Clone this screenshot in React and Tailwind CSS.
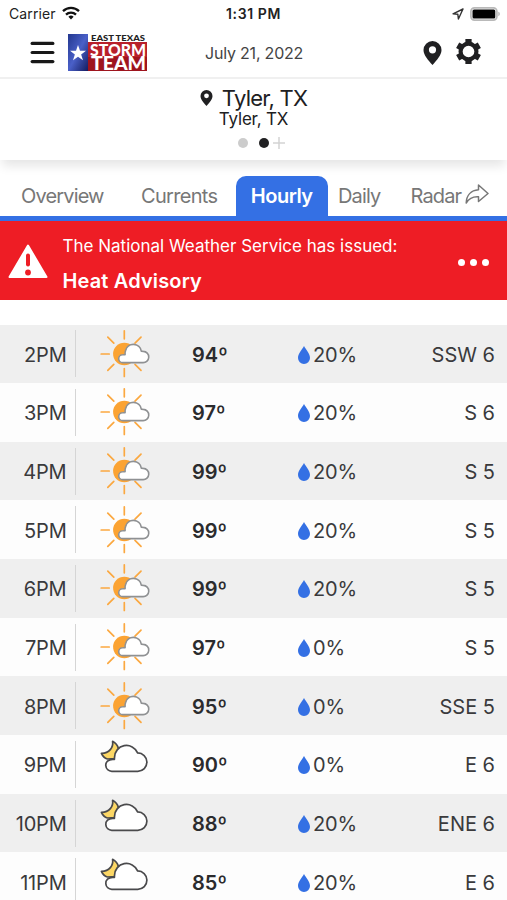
import { Menu } from 'lucide-react'

const HOURS = [
  { time: '2PM', sky: 'sun', temp: 94, rain: 20, wind: 'SSW 6' },
  { time: '3PM', sky: 'sun', temp: 97, rain: 20, wind: 'S 6' },
  { time: '4PM', sky: 'sun', temp: 99, rain: 20, wind: 'S 5' },
  { time: '5PM', sky: 'sun', temp: 99, rain: 20, wind: 'S 5' },
  { time: '6PM', sky: 'sun', temp: 99, rain: 20, wind: 'S 5' },
  { time: '7PM', sky: 'sun', temp: 97, rain: 0, wind: 'S 5' },
  { time: '8PM', sky: 'sun', temp: 95, rain: 0, wind: 'SSE 5' },
  { time: '9PM', sky: 'moon', temp: 90, rain: 0, wind: 'E 6' },
  { time: '10PM', sky: 'moon', temp: 88, rain: 20, wind: 'ENE 6' },
  { time: '11PM', sky: 'moon', temp: 85, rain: 20, wind: 'E 6' },
]

function SunCloud() {
  return (
    <svg viewBox="0 0 50 50" className="h-[50px] w-[50px] shrink-0" fill="none">
      <circle cx="24.3" cy="25" r="11.2" fill="#fba333" />
      <path
        d="M24.3 1.8v8M24.3 39.5v8M1.2 25h8M7.8 8.2l6 6M41 8.2l-6 6M7.8 41.3l6-6M41 41.3l-6-6"
        stroke="#fba840" strokeWidth="1.7" strokeLinecap="round"
      />
      <path
        d="M22.600 33.600H43A5.600 5.600 0 0 0 43.300 22.400L41.300 22.200A8 8 0 0 0 25.600 21.500C25 23 24.900 24.200 25.100 25.600L22.600 25.800A3.900 3.900 0 0 0 22.600 33.600Z"
        fill="#fff" stroke="#8f9193" strokeWidth="1.6" strokeLinejoin="round"
      />
    </svg>
  )
}

function MoonCloud() {
  return (
    <svg viewBox="0 0 50 50" className="h-[50px] w-[50px] shrink-0" fill="none" stroke="#4a4a4c" strokeWidth="1.7" strokeLinejoin="round">
      <path d="M12.600 2.300c.9 6-3.300 12.200-11.200 12.100 1.200 2.700 3.200 4.800 6 5.600l8-.5 3-10c-.8-3-3-5.800-5.800-7.200Z" fill="#fcd765" />
      <path
        d="M11.800 32.300h26a9.200 9.200 0 0 0-.2-18.400A12 12 0 0 0 14.500 18.500l-.1 1.900c-6.500-.8-9 3.300-8.600 6.300.3 3.200 2.800 5.600 6 5.600Z"
        fill="#fff"
      />
    </svg>
  )
}

function Pin({ className }) {
  return (
    <svg viewBox="0 0 18 24" className={className}>
      <path d="M9 0a9 9 0 0 1 9 9c0 5.2-4.6 10-9 15C4.6 19 0 14.2 0 9a9 9 0 0 1 9-9Zm0 5.200a3.6 3.6 0 1 0 0 7.200 3.6 3.6 0 0 0 0-7.200Z" fill="#202022" fillRule="evenodd" />
    </svg>
  )
}

function Logo() {
  return (
    <div className="flex h-[37px] w-[79px]">
      <div className="flex w-5 items-center justify-center bg-gradient-to-br from-[#23378f] via-[#4a60c8] to-[#151c60]">
        <svg viewBox="0 0 24 24" className="h-4 w-4" fill="#fff">
          <path d="M12 0l3 8.800h9l-7.300 5.400L19.500 23 12 17.600 4.500 23l2.800-8.800L0 8.800h9z" />
        </svg>
      </div>
      <svg viewBox="0 0 59 37" className="h-[37px] w-[59px] overflow-visible">
        <rect width="59" height="8" fill="#fff" />
        <rect y="8" width="59" height="29" fill="#b8202a" />
        <path d="M0 23h59v14H0z" fill="#9e141e" />
        <g fontFamily="Lato, sans-serif" fontWeight="900">
          <text x="3" y="7" fontSize="8" textLength="54" lengthAdjust="spacingAndGlyphs" fill="#222">EAST TEXAS</text>
          <text x="2" y="21.5" fontSize="17.5" textLength="56" lengthAdjust="spacingAndGlyphs" fill="#fff">STORM</text>
          <text x="3" y="36" fontSize="18.5" textLength="55" lengthAdjust="spacingAndGlyphs" fill="#fff">TEAM</text>
        </g>
      </svg>
    </div>
  )
}

function StatusBar() {
  return (
    <div className="flex h-7 items-center px-[9px] text-[#222]">
      <div className="flex flex-1 items-center gap-1.5">
        <span className="text-sm tracking-[0.1px]">Carrier</span>
        <svg viewBox="0 0 18 14" className="-mt-0.5 h-3.5 w-[18px]" fill="none" stroke="#111" strokeWidth="2.3">
          <path d="M1 5.200a11.500 11.500 0 0 1 16 0M4 8.600a7.200 7.200 0 0 1 10 0" />
          <path d="M9 13.500l-2.600-2.800a4 4 0 0 1 5.200 0z" fill="#111" stroke="none" />
        </svg>
      </div>
      <span className="text-sm font-semibold tracking-[0.6px]">1:31 PM</span>
      <div className="flex flex-1 items-center justify-end gap-1.5">
        <svg viewBox="0 0 12 12" className="h-3 w-3" fill="none" stroke="#333" strokeWidth="1.4" strokeLinejoin="round">
          <path d="M11 1L1 5.800l4.800.4.600 4.800z" />
        </svg>
        <svg viewBox="0 0 30 14" className="-mr-0.5 h-3.5 w-[30px]">
          <rect x=".9" y=".9" width="26" height="12.2" rx="3.5" fill="#fff" stroke="#b9b9b9" strokeWidth="1.7" />
          <rect x="2.5" y="2.5" width="22.8" height="9" rx="1.5" fill="#000" />
          <path d="M28.300 4.800c2 .6 2 3.800 0 4.400z" fill="#b5b5b5" />
        </svg>
      </div>
    </div>
  )
}

function Header() {
  return (
    <div className="flex h-[51px] items-center border-b-2 border-[#f0f0f0] pr-[26px] pl-[27px]">
      <div className="flex w-[178px] items-center gap-[10px]">
        <Menu size={31} strokeWidth={2.5} color="#181818" className="shrink-0" />
        <Logo />
      </div>
      <span className="flex-1 text-base tracking-[-0.2px] text-[#444]">July 21, 2022</span>
      <div className="flex items-center gap-[14px]">
        <Pin className="h-6 w-[19px]" />
        <svg viewBox="0 0 24 24" className="-mt-0.5 h-[25px] w-[25px] overflow-visible" fill="none" stroke="#202022">
          <circle cx="12" cy="12" r="7.600" strokeWidth="4" />
          <path d="M12 0v4M12 20v4M1.600 6l3.500 2M18.900 16l3.500 2M1.600 18l3.500-2M18.900 8l3.500-2" strokeWidth="6" />
        </svg>
      </div>
    </div>
  )
}

function Location() {
  return (
    <div className="flex h-[81px] flex-col items-center bg-white pt-[7px] text-[#202022] shadow-[0_8px_10px_-2px_rgba(0,0,0,0.1)]">
      <div className="flex items-center gap-[9px]">
        <Pin className="h-4 w-[13px]" />
        <span className="text-[22px] leading-6 tracking-[-0.75px]">Tyler, TX</span>
      </div>
      <span className="-mt-px text-[17px] leading-5 tracking-[-0.2px]">Tyler, TX</span>
      <div className="mt-2 ml-4 flex h-3 items-center">
        <span className="h-[10px] w-[10px] rounded-full bg-[#ccc]" />
        <span className="ml-[11px] h-[10px] w-[10px] rounded-full bg-[#202022]" />
        <svg viewBox="0 0 12 12" className="ml-1 h-3 w-3" stroke="#d3d3d3" strokeWidth="1.5">
          <path d="M6 0v12M0 6h12" />
        </svg>
      </div>
    </div>
  )
}

function Tabs() {
  return (
    <div className="flex h-[61px] items-end border-b-[5px] border-[#3470e4] text-xl tracking-[-0.85px] text-[#777]">
      <div className="flex h-[40px] w-[141px] items-center pl-[21px]">Overview</div>
      <div className="flex h-[40px] w-[95px] items-center tracking-[-0.7px]">Currents</div>
      <div className="flex h-[40px] w-[91.5px] items-center justify-center rounded-t-[10px] bg-[#3470e4] font-semibold tracking-[-0.5px] text-white">Hourly</div>
      <div className="flex h-[40px] w-[83px] items-center pl-[10.5px]">Daily</div>
      <div className="flex h-[40px] items-center gap-1">
        Radar
        <svg viewBox="0 0 24 20" className="-mt-1 h-5 w-6 shrink-0" fill="none" stroke="#777" strokeWidth="1.5" strokeLinejoin="round">
          <path d="M13.500 1L23 9.500 13.500 17.500v-4.800C8 12.300 4 14.200 1.200 19 1.500 11.500 6 6.400 13.500 5.800z" />
        </svg>
      </div>
    </div>
  )
}

function Alert() {
  return (
    <div className="flex h-[79px] items-center bg-[#ee1d25] pr-[18px] pl-2 text-white">
      <svg viewBox="0 0 40 34" className="h-[34px] w-10 shrink-0">
        <path d="M20 1.500L38.500 33h-37z" fill="#fff" stroke="#fff" strokeWidth="2" strokeLinejoin="round" />
        <path d="M20 11.500v9" stroke="#ee1d25" strokeWidth="4" strokeLinecap="round" />
        <circle cx="20" cy="28.5" r="2.9" fill="#ee1d25" />
      </svg>
      <div className="flex-1 pt-[5px] pl-[14.5px]">
        <div className="text-[17px] leading-6">The National Weather Service has issued:</div>
        <div className="mt-[11px] text-xl leading-6 font-semibold tracking-[0.15px]">Heat Advisory</div>
      </div>
      <div className="mt-1 flex gap-[5px]">
        <span className="h-[7px] w-[7px] rounded-full bg-white" />
        <span className="h-[7px] w-[7px] rounded-full bg-white" />
        <span className="h-[7px] w-[7px] rounded-full bg-white" />
      </div>
    </div>
  )
}

function HourRow({ hour }) {
  return (
    <div className="flex h-[58.67px] items-center pr-3 text-xl text-[#3a3a3c] odd:bg-[#efefef] even:bg-[#fdfdfd]">
      <div className="mr-[24.5px] flex h-[47px] w-[75.5px] items-center justify-end border-r border-[#d5d5d5] pt-0.5 pr-2 tracking-[-0.2px]">
        {hour.time}
      </div>
      {hour.sky === 'sun' ? <SunCloud /> : <MoonCloud />}
      <div className="w-[105px] pt-0.5 pl-[42px] font-semibold text-[#2b2b2d]">{hour.temp}º</div>
      <div className="ml-[42.5px] flex items-center gap-[3.5px]">
        <svg viewBox="0 0 12 18" className="mt-0.5 h-[18px] w-3" fill="#3470e4">
          <path d="M6 0c2 3.800 6 7.500 6 12a6 6 0 0 1-12 0C0 7.500 4 3.800 6 0Z" />
        </svg>
        <span className="pt-0.5 tracking-[-0.2px]">{hour.rain}%</span>
      </div>
      <div className="flex-1 pt-0.5 text-right">{hour.wind}</div>
    </div>
  )
}

export default function App() {
  return (
    <div className="h-[900px] w-[507px] overflow-hidden bg-white font-['Inter',sans-serif] leading-none whitespace-nowrap">
      <StatusBar />
      <Header />
      <Location />
      <Tabs />
      <Alert />
      <div className="pt-[24.5px]">
        {HOURS.map(h => <HourRow key={h.time} hour={h} />)}
      </div>
    </div>
  )
}
